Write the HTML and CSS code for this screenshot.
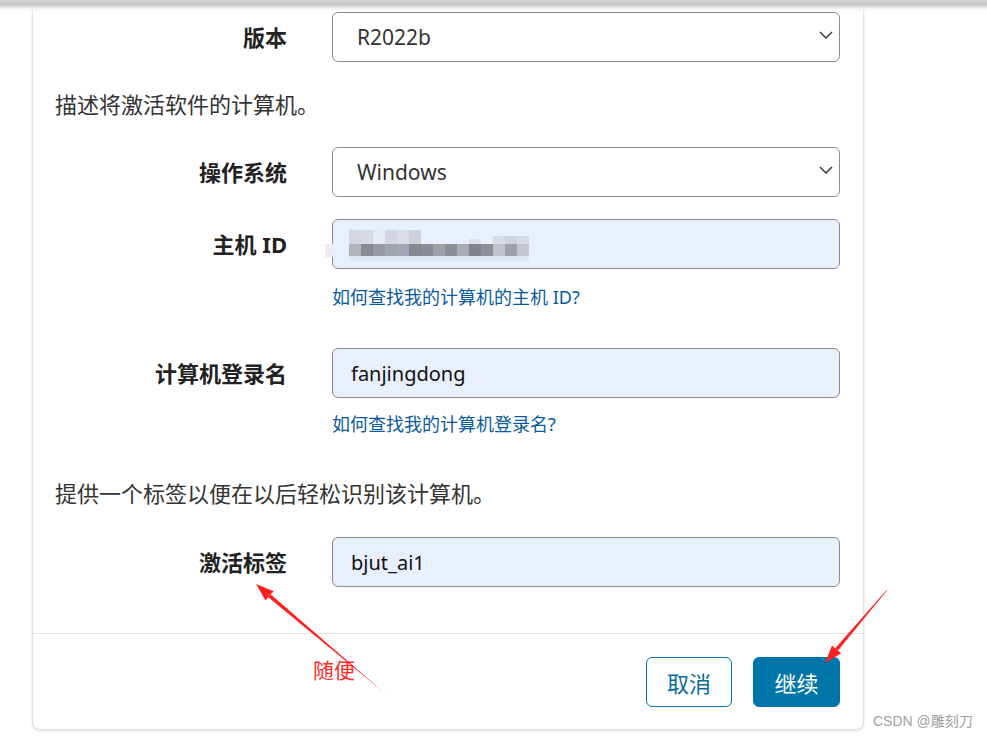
FILE: index.html
```html
<!DOCTYPE html>
<html lang="zh-CN">
<head>
<meta charset="utf-8">
<title>激活</title>
<link rel="stylesheet" href="styles.css">
</head>
<body>
<div class="topbar"></div>
<div class="card">
  <div class="card-body">
    <div class="row">
      <div class="label">版本</div>
      <div class="select"><span>R2022b</span>
        <svg class="chev" width="14" height="8" viewBox="0 0 14 8"><path d="M1 1 L7 7 L13 1" fill="none" stroke="#444" stroke-width="1.6"/></svg>
      </div>
    </div>
    <p class="desc desc-1">描述将激活软件的计算机。</p>
    <div class="row row-os">
      <div class="label">操作系统</div>
      <div class="select"><span>Windows</span>
        <svg class="chev" width="14" height="8" viewBox="0 0 14 8"><path d="M1 1 L7 7 L13 1" fill="none" stroke="#444" stroke-width="1.6"/></svg>
      </div>
    </div>
    <div class="row row-host">
      <div class="label">主机 ID</div>
      <div class="input input-host">
        <svg class="mosaic" width="210" height="40" viewBox="0 0 210 40">
          <rect x="0" y="22" width="8" height="13" fill="#ededf0"/>
          <rect x="24" y="8" width="12" height="14" fill="#d3d7e0"/>
          <rect x="36" y="8" width="12" height="14" fill="#d6dae4"/>
          <rect x="48" y="8" width="12" height="14" fill="#e6ecf6"/>
          <rect x="60" y="8" width="12" height="14" fill="#d2d6e2"/>
          <rect x="72" y="8" width="12" height="14" fill="#d9dde6"/>
          <rect x="84" y="8" width="12" height="14" fill="#cdd1db"/>
          <rect x="144" y="17" width="12" height="5" fill="#dde1ea"/>
          <rect x="168" y="14" width="12" height="8" fill="#d8dce6"/>
          <rect x="180" y="14" width="12" height="8" fill="#d0d4de"/>
          <rect x="192" y="14" width="12" height="8" fill="#d7dbe4"/>
          <rect x="24" y="22" width="12" height="12" fill="#b3b4b8"/>
          <rect x="36" y="22" width="12" height="12" fill="#878b94"/>
          <rect x="48" y="22" width="12" height="12" fill="#979aa3"/>
          <rect x="60" y="22" width="12" height="12" fill="#a0a7ab"/>
          <rect x="72" y="22" width="12" height="12" fill="#a4a7b6"/>
          <rect x="84" y="22" width="12" height="12" fill="#848890"/>
          <rect x="96" y="22" width="12" height="12" fill="#898d95"/>
          <rect x="108" y="22" width="12" height="12" fill="#9fa1a9"/>
          <rect x="120" y="22" width="12" height="12" fill="#8b8f98"/>
          <rect x="132" y="22" width="12" height="12" fill="#a8acb5"/>
          <rect x="144" y="22" width="12" height="12" fill="#7f838e"/>
          <rect x="156" y="22" width="12" height="12" fill="#8b8f98"/>
          <rect x="168" y="22" width="12" height="12" fill="#c0c3cb"/>
          <rect x="180" y="22" width="12" height="12" fill="#9ea2aa"/>
          <rect x="192" y="22" width="12" height="12" fill="#c3c7cf"/>
          <rect x="24" y="34" width="180" height="5" fill="#e1e6f1"/>
        </svg>
      </div>
    </div>
    <a class="help help-1" href="#">如何查找我的计算机的主机 ID?</a>
    <div class="row row-login">
      <div class="label">计算机登录名</div>
      <div class="input">fanjingdong</div>
    </div>
    <a class="help help-2" href="#">如何查找我的计算机登录名?</a>
    <p class="desc desc-2">提供一个标签以便在以后轻松识别该计算机。</p>
    <div class="row row-tag">
      <div class="label">激活标签</div>
      <div class="input">bjut_ai1</div>
    </div>
  </div>
  <div class="card-footer">
    <button class="btn btn-cancel">取消</button>
    <button class="btn btn-primary">继续</button>
  </div>
</div>

<div class="note">随便</div>
<div class="watermark">CSDN @雕刻刀</div>

<svg class="annot" width="987" height="739" viewBox="0 0 987 739">
  <polygon points="387.2,695.2 386.8,694.8 268.3,597.2 270.8,594.5" fill="#ff2020"/>
  <polygon points="256,584 273.6,591.3 265.5,600.4" fill="#ff2020"/>
  <polygon points="887.2,590.3 886.8,589.7 835.2,648.2 838.0,650.5" fill="#ff2020"/>
  <polygon points="825,663 841.2,653.2 832.0,645.4" fill="#ff2020"/>
</svg>
</body>
</html>
```
FILE: styles.css
```css
* { box-sizing: border-box; }

html, body {
  margin: 0;
  padding: 0;
  background: #ffffff;
  font-family: "Noto Sans", "Noto Sans CJK SC", sans-serif;
  width: 987px;
  height: 739px;
  overflow: hidden;
  position: relative;
}

.topbar {
  position: fixed;
  top: 0;
  left: 0;
  right: 0;
  height: 11px;
  background: linear-gradient(to bottom, #d6d6d6 0px, #c6c6c6 4px, #d4d4d4 6px, #eeeeee 8px, rgba(255,255,255,0) 11px);
  z-index: 5;
}

.card {
  margin-left: 32px;
  width: 832px;
  border: 1px solid #e3e3e3;
  border-top: none;
  border-radius: 0 0 8px 8px;
  box-shadow: 0 1px 3px rgba(0,0,0,0.12);
  background: #fff;
}

.card-body {
  padding: 12px 22px 46px 22px;
  display: flex;
  flex-direction: column;
}

.row {
  display: grid;
  grid-template-columns: 232px 508px;
  column-gap: 45px;
  align-items: center;
}

.label {
  text-align: right;
  font-weight: 700;
  font-size: 22px;
  line-height: 30px;
  color: #222;
}

.select {
  height: 50px;
  border: 1px solid #8c8c8c;
  border-radius: 6px;
  background: #fff;
  display: flex;
  align-items: center;
  justify-content: space-between;
  padding: 0 6px 0 24px;
  font-size: 21px;
  color: #333;
}

.chev { display: block; margin-top: -4px; }

.input {
  height: 50px;
  border: 1px solid #8c8c8c;
  border-radius: 6px;
  background: #e8f0fe;
  display: flex;
  align-items: center;
  padding: 0 0 0 18px;
  font-size: 20px;
  color: #111;
}

.input-host { padding-left: 0; overflow: visible; }
.mosaic { display: block; margin-left: -8px; margin-top: -4px; }

.desc {
  margin: 0;
  font-size: 22px;
  line-height: 30px;
  color: #333;
}

.desc-1 { margin-top: 27px; }
.row-os { margin-top: 28px; }
.row-host { margin-top: 22px; }

.help {
  margin-left: 277px;
  font-size: 18px;
  line-height: 26px;
  color: #0b5a9e;
  text-decoration: none;
  align-self: flex-start;
}

.help-1 { margin-top: 15px; }
.row-login { margin-top: 38px; }
.help-2 { margin-top: 13px; }
.desc-2 { margin-top: 41px; }
.row-tag { margin-top: 29px; }

.card-footer {
  border-top: 1px solid #e5e5e5;
  padding: 23px 23px 22px 22px;
  display: flex;
  justify-content: flex-end;
  gap: 21px;
}

.btn {
  height: 50px;
  border-radius: 6px;
  font-family: "Noto Sans", "Noto Sans CJK SC", sans-serif;
  font-size: 22px;
  padding: 0;
  cursor: pointer;
}

.btn-cancel {
  width: 86px;
  border: 1px solid #0076a8;
  background: #fff;
  color: #0a6aa0;
}

.btn-primary {
  width: 87px;
  border: 1px solid #0076a8;
  background: #0076a8;
  color: #fff;
}

.note {
  position: absolute;
  left: 313px;
  top: 655px;
  font-size: 21px;
  line-height: 30px;
  color: #ff2a2a;
}

.watermark {
  position: absolute;
  left: 873px;
  top: 711px;
  font-family: "Liberation Sans", "Noto Sans CJK SC", sans-serif;
  font-size: 14px;
  line-height: 20px;
  color: #a0a0a0;
}

.annot {
  position: absolute;
  left: 0;
  top: 0;
  pointer-events: none;
  z-index: 6;
}
```
